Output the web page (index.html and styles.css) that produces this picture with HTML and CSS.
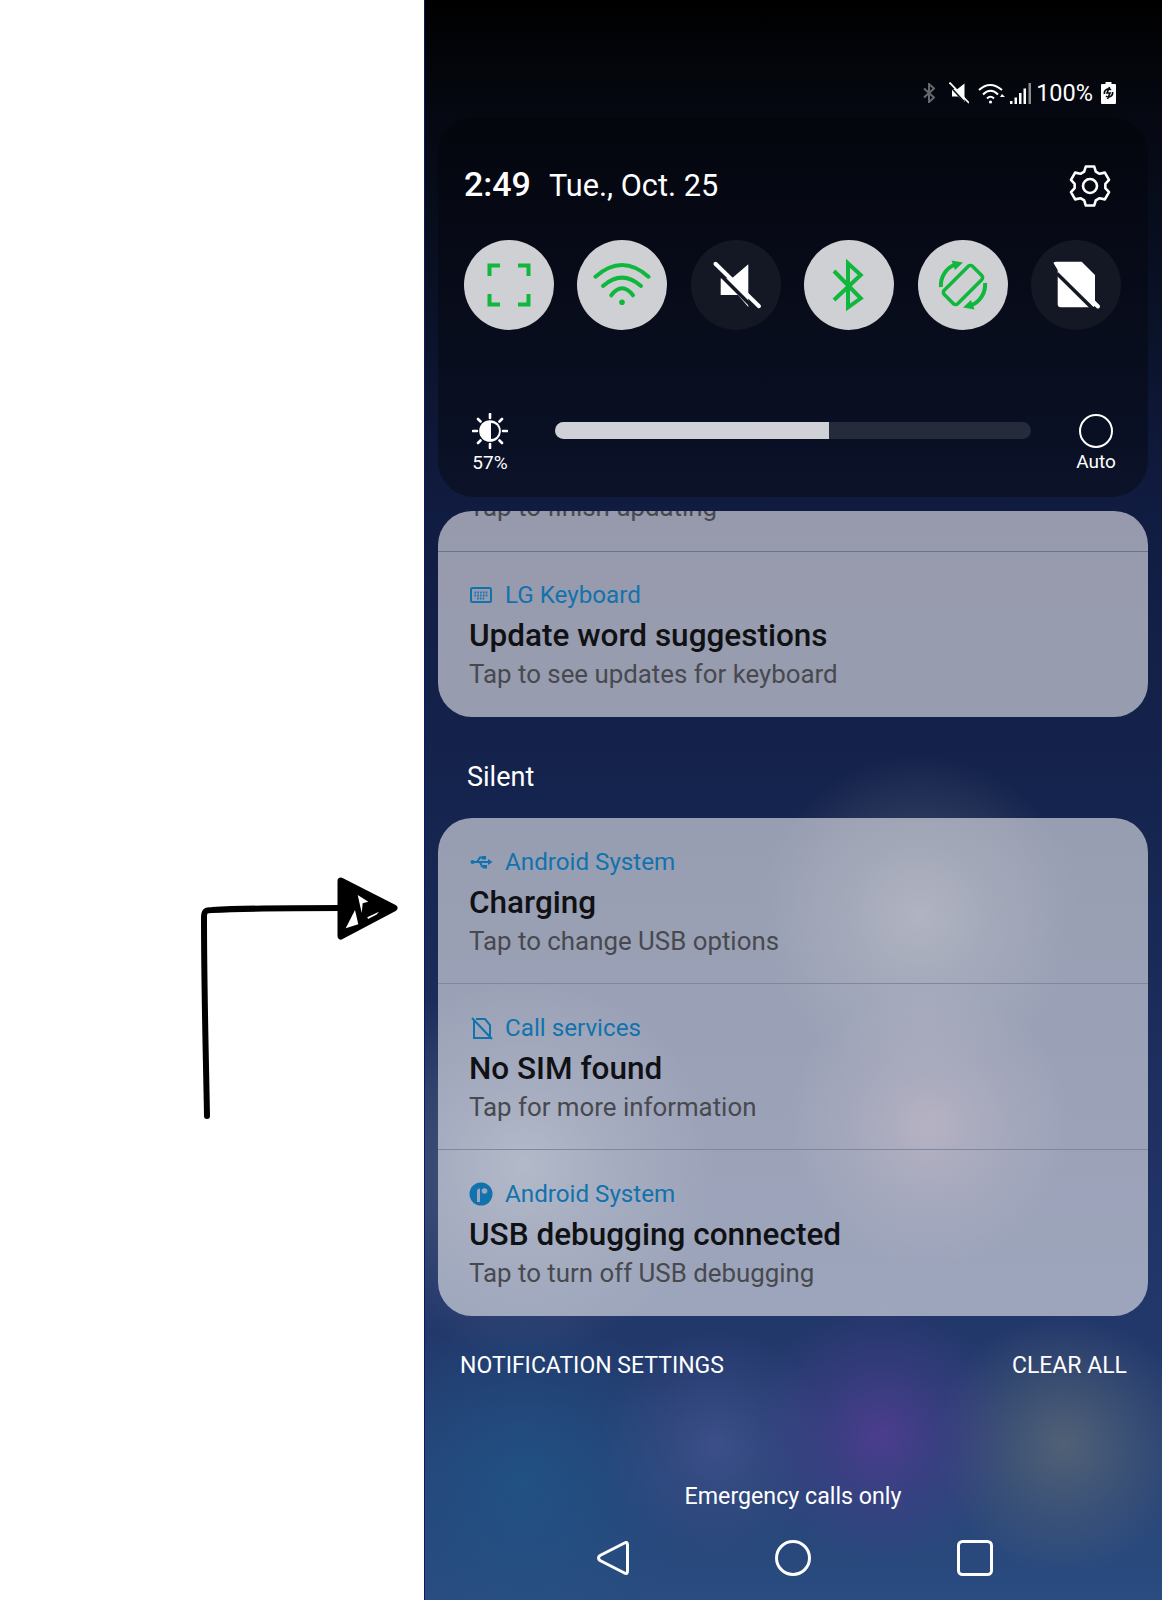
FILE: index.html
```html
<!DOCTYPE html>
<html lang="en">
<head>
  <meta charset="UTF-8">
  <meta name="viewport" content="width=device-width, initial-scale=1.0">
  <title>Notifications</title>
  <link rel="stylesheet" href="styles.css">
</head>
<body>
  <div class="page">
    <!-- Annotation side -->
    <div class="side">
      <svg class="arrow" viewBox="190 870 210 255" width="210" height="255">
        <path class="arrow-line" d="M207 1116 C206 1060 204 990 204 917 C204 911 206 910 212 910 C250 908 300 908 342 908"/>
        <path class="arrow-head" d="M341 881 L394 908 L341 936 Z"/>
        <path class="arrow-slit" d="M357.7 895 L368.3 901.7 L362.7 903.3 L361.7 913 Z"/>
        <path class="arrow-slit" d="M355 910 L345.7 928.3 L358.3 924.3 Z"/>
        <path class="arrow-slit" d="M367.3 917.3 L379 911.7 L376.7 914.5 L368 919 Z"/>
      </svg>
    </div>

    <div class="phone">
      <!-- Status bar -->
      <div class="status">
        <svg class="st-bt" viewBox="0 0 12 20" width="12" height="20"><path d="M1 5.5 L11 14.5 L6 19 V1 L11 5.5 L1 14.5"/></svg>
        <svg class="st-mute" viewBox="0 0 20 22" width="20" height="22"><path class="fill-w" d="M15.5 1.5 V20 L9 14.5 H3 V7 H8.5 Z"/><path class="st-cut" d="M0 3.5 L15 19.5"/><path class="st-slash" d="M0.5 0.5 L20 21"/></svg>
        <svg class="st-wifi" viewBox="0 0 27 22" width="27" height="22"><path d="M1 8 Q12 -2 24 8"/><path d="M5 12.5 Q12.5 5 20 12.5"/><path d="M9 16.5 Q12.5 13 16 16.5"/><circle cx="12.5" cy="20" r="1.6"/><path class="fill-w" d="M22 15 L27 15 L24 12 Z"/></svg>
        <svg class="st-signal" viewBox="0 0 23 22" width="23" height="22"><path class="fill-w" d="M0 19 H2.5 V22 H0 Z M4.5 15.5 H7 V22 H4.5 Z M9 11 H11.5 V22 H9 Z M13.5 6.5 H16 V22 H13.5 Z"/><path class="fill-g" d="M18.5 1 H21 V22 H18.5 Z"/></svg>
        <span class="st-pct">100%</span>
        <svg class="st-batt" viewBox="0 0 15 22" width="15" height="22"><path class="fill-w" d="M4.5 0 H10.5 V2 H14 Q15 2 15 3 V21 Q15 22 14 22 H1 Q0 22 0 21 V3 Q0 2 1 2 H4.5 Z"/><path class="st-charge" d="M3.5 12 A4 4 0 0 1 10 8 M11.5 10 A4 4 0 0 1 5 14 M8.5 5 L6 11 H9 L6.5 17"/></svg>
      </div>

      <!-- Quick settings -->
      <div class="panel">
        <div class="panel-head">
          <div class="when">
            <span class="clock">2:49</span>
            <span class="date">Tue., Oct. 25</span>
          </div>
          <svg class="gear" viewBox="0 0 42 42" width="42" height="42">
            <path d="M15.19 6.63 L16.84 1.44 L25.16 1.44 L26.81 6.63 L30.55 8.79 L35.86 7.62 L40.02 14.82 L36.35 18.84 L36.35 23.16 L40.02 27.18 L35.86 34.38 L30.55 33.21 L26.81 35.37 L25.16 40.56 L16.84 40.56 L15.19 35.37 L11.45 33.21 L6.14 34.38 L1.98 27.18 L5.65 23.16 L5.65 18.84 L1.98 14.82 L6.14 7.62 L11.45 8.79 Z"/>
            <circle cx="21" cy="21" r="7"/>
          </svg>
        </div>

        <div class="toggles">
          <div class="toggle on">
            <svg viewBox="0 0 90 90" width="90" height="90"><path class="ic-line" d="M25.5 36 V25.5 H36 M54 25.5 H64.5 V36 M64.5 54 V64.5 H54 M36 64.5 H25.5 V54"/></svg>
          </div>
          <div class="toggle on">
            <svg viewBox="0 0 90 90" width="90" height="90"><path class="ic-line round" d="M18.5 36.7 Q45 13.3 71.5 36.7"/><path class="ic-line round" d="M26 46 Q45 29.4 64 46"/><path class="ic-line round" d="M34.3 55.3 Q45 41.3 56 55.3"/><circle class="ic-dot" cx="45" cy="62.3" r="2.8"/></svg>
          </div>
          <div class="toggle">
            <svg viewBox="0 0 90 90" width="90" height="90"><path class="ic-white" d="M57.3 24.3 V67 L47 55 H29.7 V38.3 H41 Z"/><path class="ic-gap" d="M24 29.5 L62 67.5"/><path class="ic-slash" d="M24.5 23.8 L68 66.2"/></svg>
          </div>
          <div class="toggle on">
            <svg viewBox="0 0 90 90" width="90" height="90"><path class="ic-line" d="M30 31 L56.7 58.3 L44 67.3 V23.3 L56.7 35 L30 60"/></svg>
          </div>
          <div class="toggle on">
            <svg viewBox="0 0 90 90" width="90" height="90">
              <rect class="ic-line thin" x="25" y="35.5" width="40" height="19" rx="3" transform="rotate(-45 45 45)"/>
              <path class="ic-line" d="M23 47 A22 22 0 0 1 36 25"/>
              <path class="ic-line" d="M67 43 A22 22 0 0 1 54 65"/>
              <path class="ic-dot" d="M33.5 20.5 L45 22.5 L37 30 Z M56.5 69.5 L45 67.5 L53 60 Z"/>
            </svg>
          </div>
          <div class="toggle">
            <svg viewBox="0 0 90 90" width="90" height="90"><path class="ic-white" d="M22.5 23 Q23 21.7 25 21.7 H50.7 L64 35 V64 Q64 67.3 61 67.3 H29.7 Q26.7 67.3 26.7 64.3 V30 Z"/><path class="ic-tip" d="M60 59.5 L67 66.5"/><path class="ic-gap" d="M26 33.5 L62 69"/></svg>
          </div>
        </div>

        <div class="bright">
          <div class="bright-col">
            <svg class="sun" viewBox="0 0 36 36" width="36" height="36">
              <path class="sun-rays" d="M18 1 V5 M18 31 V35 M1 18 H5 M31 18 H35 M6 6 L8.5 8.5 M27.5 27.5 L30 30 M30 6 L27.5 8.5 M8.5 27.5 L6 30"/>
              <circle class="sun-disc" cx="18" cy="18" r="10.8"/>
              <path class="sun-half" d="M19 10 A8 8 0 0 1 19 26 Z"/>
            </svg>
            <span class="bright-label">57%</span>
          </div>
          <div class="bar"><div class="bar-fill" style="width:57.6%"></div></div>
          <div class="bright-col auto-col">
            <div class="auto-ring"></div>
            <span class="bright-label">Auto</span>
          </div>
        </div>
      </div>

      <!-- Notifications -->
      <div class="card">
        <div class="notif-cut"><p class="notif-sub">Tap to finish updating</p></div>
        <div class="notif first-cut">
          <div class="notif-app">
            <svg class="app-ic" viewBox="0 0 24 24" width="24" height="24"><rect class="app-line" x="2" y="5" width="20" height="14" rx="1.5"/><path class="app-keys" d="M5.5 9.5 H18.5 M5.5 12.5 H18.5 M8 15.5 H16"/></svg>
            <span>LG Keyboard</span>
          </div>
          <h3 class="notif-title">Update word suggestions</h3>
          <p class="notif-sub">Tap to see updates for keyboard</p>
        </div>
      </div>

      <div class="section-label">Silent</div>

      <div class="card">
        <div class="notif">
          <div class="notif-app">
            <svg class="app-ic" viewBox="0 0 24 24" width="24" height="24"><circle class="app-fill" cx="3.5" cy="12" r="2"/><path class="app-line" d="M4 12 H20 M8 12 L11 7.5 H13 M11 12 L13 16.5 H15"/><rect class="app-fill" x="13" y="6" width="4" height="3.5"/><rect class="app-fill" x="14" y="15" width="4" height="3.5"/><path class="app-fill" d="M19 9 L23.5 12 L19 15 Z"/></svg>
            <span>Android System</span>
          </div>
          <h3 class="notif-title">Charging</h3>
          <p class="notif-sub">Tap to change USB options</p>
        </div>
        <div class="notif">
          <div class="notif-app">
            <svg class="app-ic" viewBox="0 0 24 24" width="24" height="24"><path class="app-line" d="M5 5 V22 H21 V9 L16 3 H7"/><path class="app-line" d="M3 2 L23 23"/></svg>
            <span>Call services</span>
          </div>
          <h3 class="notif-title">No SIM found</h3>
          <p class="notif-sub">Tap for more information</p>
        </div>
        <div class="notif last">
          <div class="notif-app">
            <svg class="app-ic" viewBox="0 0 24 24" width="24" height="24"><circle class="app-fill" cx="12" cy="12" r="11.5"/><path class="app-cut" d="M8 20 V9 Q8 6.5 11 6.5 V20 Z"/><circle class="app-cut" cx="15.5" cy="9" r="2.8"/></svg>
            <span>Android System</span>
          </div>
          <h3 class="notif-title">USB debugging connected</h3>
          <p class="notif-sub">Tap to turn off USB debugging</p>
        </div>
      </div>

      <div class="actions">
        <span>NOTIFICATION SETTINGS</span>
        <span>CLEAR ALL</span>
      </div>

      <div class="carrier">Emergency calls only</div>

      <div class="nav">
        <svg viewBox="0 0 32 36" width="32" height="36"><path d="M27.5 3 Q30.5 1.2 30.5 5 V31 Q30.5 34.8 27.5 33 L3 20.5 Q0 18 3 15.5 Z"/></svg>
        <svg viewBox="0 0 36 36" width="36" height="36"><circle cx="18" cy="18" r="16.5"/></svg>
        <svg viewBox="0 0 36 36" width="36" height="36"><rect x="1.5" y="1.5" width="33" height="33" rx="4"/></svg>
      </div>
    </div>
  </div>
</body>
</html>
```

FILE: styles.css
```css
* {
  box-sizing: border-box;
}

body {
  margin: 0;
  padding: 0;
  font-family: Roboto, "Noto Sans", sans-serif;
  background: #fff;
}

.page {
  display: flex;
  width: 1162px;
  height: 1600px;
  overflow: hidden;
}

/* left white area with the drawn arrow */
.side {
  position: relative;
  width: 424px;
  background: #fff;
}

.arrow {
  position: absolute;
  left: 190px;
  top: 870px;
}

.arrow-line {
  fill: none;
  stroke: #000;
  stroke-width: 6;
  stroke-linecap: round;
}

.arrow-head {
  fill: #000;
  stroke: #000;
  stroke-width: 7;
  stroke-linejoin: round;
}

.arrow-slit {
  fill: #fff;
}

/* phone */
.phone {
  width: 738px;
  height: 1600px;
  padding-top: 81px;
  color: #fff;
  box-shadow: inset 1px 0 #0c1a5c;
  background:
    radial-gradient(circle at 495px 915px, rgba(165, 165, 165, 0.42), rgba(165, 165, 165, 0.2) 70px, rgba(165, 165, 165, 0) 160px),
    radial-gradient(circle at 505px 1125px, rgba(190, 140, 160, 0.42), rgba(190, 140, 160, 0.2) 60px, rgba(190, 140, 160, 0) 140px),
    radial-gradient(circle at 100px 1165px, rgba(130, 145, 165, 0.6), rgba(130, 145, 165, 0.28) 80px, rgba(130, 145, 165, 0) 190px),
    radial-gradient(circle at 458px 1435px, rgba(88, 60, 150, 0.75), rgba(88, 60, 150, 0.35) 60px, rgba(88, 60, 150, 0) 130px),
    radial-gradient(circle at 292px 1445px, rgba(70, 85, 145, 0.7), rgba(70, 85, 145, 0.35) 50px, rgba(70, 85, 145, 0) 115px),
    radial-gradient(circle at 640px 1445px, rgba(88, 102, 118, 0.85), rgba(88, 102, 118, 0.45) 60px, rgba(88, 102, 118, 0) 130px),
    radial-gradient(circle at 100px 1480px, rgba(30, 90, 140, 0.6), rgba(30, 90, 140, 0) 170px),
    linear-gradient(#000 0, #05070f 90px, #0a1228 320px, #111c42 520px, #15244e 800px, #1e3060 1100px, #22376a 1320px, #2a4c80 1600px);
}

.status {
  display: flex;
  align-items: center;
  justify-content: flex-end;
  height: 24px;
  margin-bottom: 12px;
  padding-right: 46px;
}

.status svg {
  display: block;
  flex: none;
}

.st-bt path {
  fill: none;
  stroke: #66686c;
  stroke-width: 2;
}

.st-bt {
  margin-right: 14px;
}

.st-mute {
  margin-right: 9px;
}

.st-mute .st-cut {
  stroke: #05070f;
  stroke-width: 1.5;
}

.st-mute .st-slash {
  stroke: #fff;
  stroke-width: 1.8;
}

.st-wifi {
  margin-right: 5px;
}

.st-signal {
  margin-right: 3px;
}

.fill-w {
  fill: #fff;
}

.fill-g {
  fill: #8a8b8e;
}

.st-wifi path {
  fill: none;
  stroke: #fff;
  stroke-width: 2;
}

.st-wifi path.fill-w {
  fill: #fff;
  stroke: none;
}

.st-wifi circle {
  fill: #fff;
}

.st-pct {
  margin-right: 8px;
  font-size: 23.5px;
  line-height: 24px;
}

.st-charge {
  fill: none;
  stroke: #05070f;
  stroke-width: 1.6;
}

/* quick settings panel */
.panel {
  height: 380px;
  margin: 0 14px;
  padding: 48px 27px 0 26px;
  border-radius: 36px;
  background: linear-gradient(#04060d, #0a1024 85%, #0c1228);
}

.panel-head {
  display: flex;
  align-items: center;
  height: 42px;
}

.when {
  display: flex;
  align-items: baseline;
  padding-bottom: 4px;
}

.clock {
  font-size: 34px;
  font-weight: 500;
}

.date {
  margin-left: 18px;
  font-size: 30.7px;
}

.gear {
  margin-left: auto;
  margin-right: 10px;
}

.gear path,
.gear circle {
  fill: none;
  stroke: #fff;
  stroke-width: 2.6;
  stroke-linejoin: round;
}

.toggles {
  display: flex;
  justify-content: space-between;
  margin-top: 33px;
}

.toggle {
  width: 90px;
  height: 90px;
  border-radius: 50%;
  background: #141824;
}

.toggle.on {
  background: #cfd0d3;
}

.toggle svg {
  display: block;
}

.ic-line {
  fill: none;
  stroke: #0fb83c;
  stroke-width: 4;
}

.ic-line.thin {
  stroke-width: 3.5;
}

.ic-line.round {
  stroke-linecap: round;
}

.ic-dot {
  fill: #0fb83c;
}

.ic-white {
  fill: #fff;
}

.ic-gap {
  stroke: #141824;
  stroke-width: 3.5;
}

.ic-slash,
.ic-tip {
  stroke: #fff;
  stroke-width: 4;
  stroke-linecap: round;
}

.bright {
  display: flex;
  align-items: flex-start;
  margin-top: 83px;
}

.bright-col {
  display: flex;
  flex-direction: column;
  align-items: center;
  flex: none;
  width: 52px;
}

.auto-col {
  margin-right: -1px;
}

.sun {
  display: block;
}

.sun-rays {
  stroke: #fff;
  stroke-width: 2.6;
  stroke-linecap: round;
}

.sun-disc {
  fill: #fff;
}

.sun-half {
  fill: #0a1024;
}

.bright-label {
  margin-top: 3px;
  font-size: 19px;
  line-height: 22px;
}

.auto-ring {
  width: 34px;
  height: 34px;
  margin-top: 1px;
  border: 2px solid #fff;
  border-radius: 50%;
}

.bar {
  flex: 1;
  height: 17px;
  margin: 9px 39px 0 39px;
  overflow: hidden;
  border-radius: 9px;
  background: #262b3c;
}

.bar-fill {
  height: 100%;
  background: #d0d1d6;
}

/* notification cards */
.card {
  margin: 14px 14px 0;
  overflow: hidden;
  border-radius: 34px;
  background: rgba(235, 235, 240, 0.61);
}

.notif-cut {
  height: 41px;
  padding-left: 31px;
  overflow: hidden;
  border-bottom: 1px solid #6f7489;
}

.notif-cut p {
  margin-top: -19px;
}

.notif {
  height: 166px;
  padding: 29px 31px 0;
  border-bottom: 1px solid #7f88a0;
}

.notif.first-cut,
.notif.last {
  border-bottom: 0;
}

.notif.first-cut {
  height: 165px;
  padding-top: 28px;
}

.notif-app {
  display: flex;
  align-items: center;
  height: 30px;
  font-size: 24.2px;
  color: #1272ad;
}

.app-ic {
  flex: none;
  margin-right: 12px;
}

.app-line {
  fill: none;
  stroke: #1272ad;
  stroke-width: 2;
}

.app-keys {
  fill: none;
  stroke: #1272ad;
  stroke-width: 2;
  stroke-dasharray: 1.6 1.2;
}

.app-fill {
  fill: #1272ad;
}

.app-cut {
  fill: #9ea6bb;
}

.notif-title {
  margin: 6px 0 0;
  font-size: 31.5px;
  font-weight: 500;
  line-height: 40px;
  color: #101114;
}

.notif-sub {
  margin: 3px 0 0;
  font-size: 25.85px;
  line-height: 30px;
  color: #48494f;
}

.section-label {
  margin: 45px 0 26px 43px;
  font-size: 27px;
  line-height: 30px;
}

.section-label + .card {
  margin-top: 0;
}

.actions {
  display: flex;
  justify-content: space-between;
  margin-top: 35px;
  padding: 0 35px 0 36px;
  font-size: 23px;
  line-height: 30px;
}

.carrier {
  margin-top: 100px;
  font-size: 23.2px;
  line-height: 30px;
  text-align: center;
}

.nav {
  display: flex;
  justify-content: center;
  gap: 146px;
  margin-top: 29px;
  padding-left: 4px;
}

.nav svg {
  display: block;
  fill: none;
  stroke: #fff;
  stroke-width: 3;
  stroke-linejoin: round;
}
```
